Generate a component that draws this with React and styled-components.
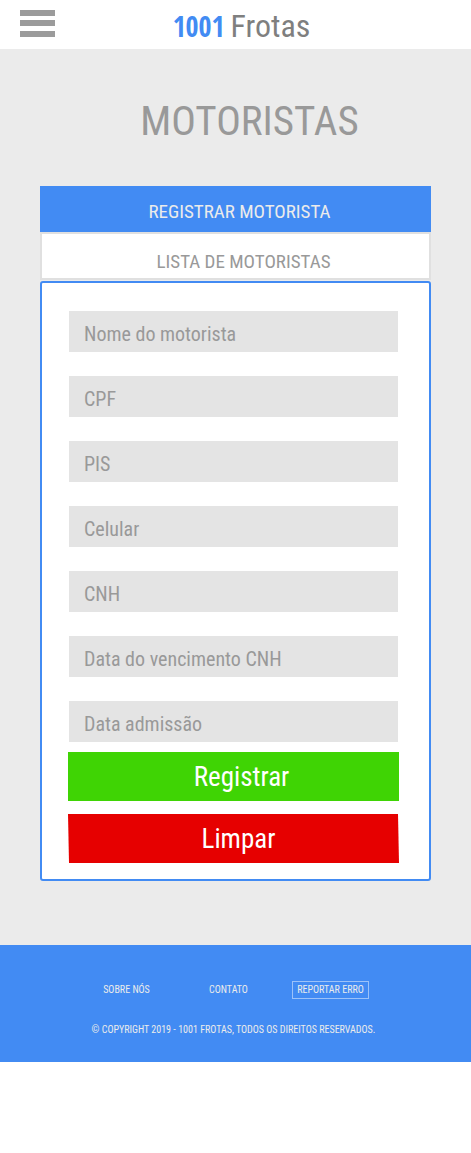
import React from "react";
import styled, { createGlobalStyle, css } from "styled-components";

const GlobalStyle = createGlobalStyle`
  *, *::before, *::after { box-sizing: border-box; }
  body {
    margin: 0;
    background: #fff;
    color: #999;
    font-family: "Roboto Condensed", Roboto, sans-serif;
  }
  button, input { font-family: inherit; }
`;

const Header = styled.header`
  display: grid;
  grid-template-columns: 40px 1fr 28px;
  align-items: center;
  height: 49px;
  padding: 0 20px;
  background: #fff;
`;

const MenuButton = styled.button`
  display: block;
  width: 35px;
  height: 27px;
  margin-bottom: 3px;
  padding: 0;
  border: 0;
  background: none;
  cursor: pointer;

  svg { display: block; }
`;

const Logo = styled.a`
  justify-self: center;
  display: flex;
  align-items: baseline;
  gap: 6px;
  padding-top: 2px;
  color: #7f7f7f;
  font-size: 32px;
  line-height: 46px;
  text-decoration: none;
`;

const LogoNumber = styled.strong`
  color: #428bf3;
  font-family: "Open Sans Condensed", "Roboto Condensed", Roboto, sans-serif;
  font-size: 28px;
  font-weight: 700;
`;

const Main = styled.main`
  padding: 40px 40px 64px;
  background: #ebebeb;
`;

const Title = styled.h1`
  margin: 0 0 33px;
  padding-left: 28px;
  font-size: 41px;
  font-weight: 400;
  line-height: 64px;
  text-align: center;
`;

const Tabs = styled.nav`
  display: flex;
  flex-direction: column;
  margin-bottom: 1px;
`;

const Tab = styled.button`
  height: 48px;
  padding: 12px 0 0 16px;
  border: 2px solid #e0e0e0;
  background: #fff;
  color: #999;
  font-size: 19px;
  line-height: 24px;
  cursor: pointer;

  ${({ $active }) => $active && css`
    height: 46px;
    padding: 6px 0 0 8px;
    border: 0;
    background: #428bf3;
    color: #ebebeb;
  `}
`;

const Form = styled.form`
  padding: 28px 30px 16px 26px;
  border: 2px solid #428bf3;
  border-radius: 3px;
  background: #fff;
`;

const Fields = styled.div`
  display: flex;
  flex-direction: column;
  gap: 24px;
  margin: 0 1px 10px;
`;

const Field = styled.input`
  width: 100%;
  height: 41px;
  padding: 4px 15px 0;
  border: 0;
  border-radius: 0;
  background: #e4e4e4;
  color: #666;
  font-size: 20px;

  &::placeholder { color: #999; opacity: 1; }
`;

const Actions = styled.div`
  display: flex;
  flex-direction: column;
  gap: 13px;
`;

const ActionButton = styled.button`
  height: 49px;
  padding: 0 0 0 16px;
  border: 0;
  background: #3fd404;
  color: #fff;
  font-size: 27px;
  line-height: 32px;
  cursor: pointer;
`;

const ClearButton = styled(ActionButton)`
  padding-left: 10px;
  background: #e60000;
  clip-path: polygon(0 0, calc(100% - 1px) 0, 100% 100%, 1px 100%);
`;

const Footer = styled.footer`
  padding: 36px 16px 24px;
  background: #428bf3;
  color: #ebebeb;
`;

const FooterLinks = styled.nav`
  display: grid;
  grid-template-columns: repeat(3, 102px);
  justify-content: center;
  justify-items: center;
  align-items: center;
  margin-right: 14px;
`;

const FooterLink = styled.a`
  padding: 0 4px;
  border: 1px solid ${({ $boxed }) => ($boxed ? "#9cc2f9" : "transparent")};
  color: inherit;
  font-size: 10px;
  line-height: 16px;
  text-decoration: none;
  white-space: nowrap;
`;

const Copyright = styled.p`
  margin: 23px 4px 0 0;
  font-size: 10px;
  line-height: 16px;
  text-align: center;
`;

const fields = [
  { name: "nome", label: "Nome do motorista" },
  { name: "cpf", label: "CPF" },
  { name: "pis", label: "PIS" },
  { name: "celular", label: "Celular" },
  { name: "cnh", label: "CNH" },
  { name: "vencimento", label: "Data do vencimento CNH" },
  { name: "admissao", label: "Data admissão" },
];

export default function App() {
  return (
    <>
      <GlobalStyle />
      <Header>
        <MenuButton type="button" aria-label="Menu">
          <svg width="35" height="27" viewBox="0 0 35 27" fill="#9b9b9b" aria-hidden="true">
            <rect width="35" height="6" />
            <rect y="10" width="35" height="6" />
            <rect y="21" width="35" height="6" />
          </svg>
        </MenuButton>
        <Logo href="#">
          <LogoNumber>1001</LogoNumber>
          <span>Frotas</span>
        </Logo>
      </Header>
      <Main>
        <Title>MOTORISTAS</Title>
        <Tabs>
          <Tab type="button" $active>REGISTRAR MOTORISTA</Tab>
          <Tab type="button">LISTA DE MOTORISTAS</Tab>
        </Tabs>
        <Form onSubmit={(event) => event.preventDefault()}>
          <Fields>
            {fields.map(({ name, label }) => (
              <Field key={name} name={name} type="text" placeholder={label} aria-label={label} />
            ))}
          </Fields>
          <Actions>
            <ActionButton type="submit">Registrar</ActionButton>
            <ClearButton type="reset">Limpar</ClearButton>
          </Actions>
        </Form>
      </Main>
      <Footer>
        <FooterLinks>
          <FooterLink href="#sobre">SOBRE NÓS</FooterLink>
          <FooterLink href="#contato">CONTATO</FooterLink>
          <FooterLink href="#erro" $boxed>REPORTAR ERRO</FooterLink>
        </FooterLinks>
        <Copyright>© COPYRIGHT 2019 - 1001 FROTAS, TODOS OS DIREITOS RESERVADOS.</Copyright>
      </Footer>
    </>
  );
}
